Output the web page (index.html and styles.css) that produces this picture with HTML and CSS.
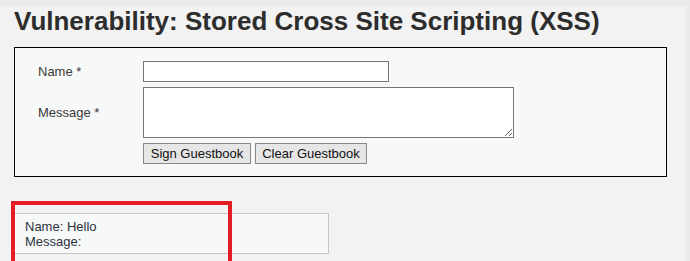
FILE: index.html
```html
<!DOCTYPE html>
<html>
<head>
<meta charset="utf-8">
<link rel="stylesheet" href="styles.css">
</head>
<body>
<div class="page">
  <h1 class="title">Vulnerability: Stored Cross Site Scripting (XSS)</h1>
  <div class="code-area">
    <form class="gb-form">
      <label class="lbl">Name *</label>
      <input class="name-in" type="text">
      <label class="lbl">Message *</label>
      <textarea class="msg-in"></textarea>
      <span></span>
      <div class="buttons">
        <button type="button" class="btn btn-sign">Sign Guestbook</button>
        <button type="button" class="btn btn-clear">Clear Guestbook</button>
      </div>
    </form>
  </div>
  <div class="entry">Name: Hello<br>Message: </div>
</div>
<div class="highlight"></div>
</body>
</html>
```

FILE: styles.css
```css
html, body {
  margin: 0;
  padding: 0;
}
body {
  background: #eaeaea;
  font-family: "Liberation Sans", Arial, sans-serif;
  color: #333;
  height: 261px;
  overflow: hidden;
}
.page {
  width: 686px;
  height: 261px;
  box-sizing: border-box;
  padding: 0 19px 0 14px;
  background: #f2f2f2;
}
.title {
  margin: 6px 0 11px 0;
  font-size: 26px;
  line-height: 30px;
  font-weight: bold;
  color: #2d2d2d;
  white-space: nowrap;
}
.code-area {
  border: 1px solid #000;
  background: #f7f8f8;
  padding: 13px 20px 12px 23px;
}
.gb-form {
  display: grid;
  grid-template-columns: 105px auto;
  row-gap: 5px;
  align-items: center;
  justify-items: start;
  font-size: 13px;
}
.lbl {
  color: #3a3a3a;
  line-height: 15px;
}
.name-in {
  box-sizing: border-box;
  width: 246px;
  height: 21px;
  border: 1px solid #767676;
  background: #fff;
  margin: 0;
  padding: 1px 2px;
}
.msg-in {
  box-sizing: border-box;
  width: 371px;
  height: 51px;
  border: 1px solid #767676;
  background: #fff;
  margin: 0;
  display: block;
}
.buttons {
  display: flex;
  gap: 4px;
}
.btn {
  box-sizing: border-box;
  height: 21px;
  margin: 0;
  padding: 0;
  text-align: center;
  font-family: "Liberation Sans", Arial, sans-serif;
  font-size: 13px;
  color: #111;
  background: #e6e6e6;
  border: 1px solid #8a8a8a;
  border-radius: 0;
}
.btn-sign {
  width: 108px;
}
.btn-clear {
  width: 112px;
}
.entry {
  margin-top: 36px;
  width: 315px;
  box-sizing: border-box;
  border: 1px solid #c4c4c4;
  background: #f7f8f8;
  padding: 5px 10px 4px 10px;
  font-size: 13px;
  line-height: 15px;
  color: #2b3340;
}
.highlight {
  position: absolute;
  left: 11px;
  top: 201px;
  width: 221px;
  height: 72px;
  box-sizing: border-box;
  border: 4px solid #e31d24;
}
```
